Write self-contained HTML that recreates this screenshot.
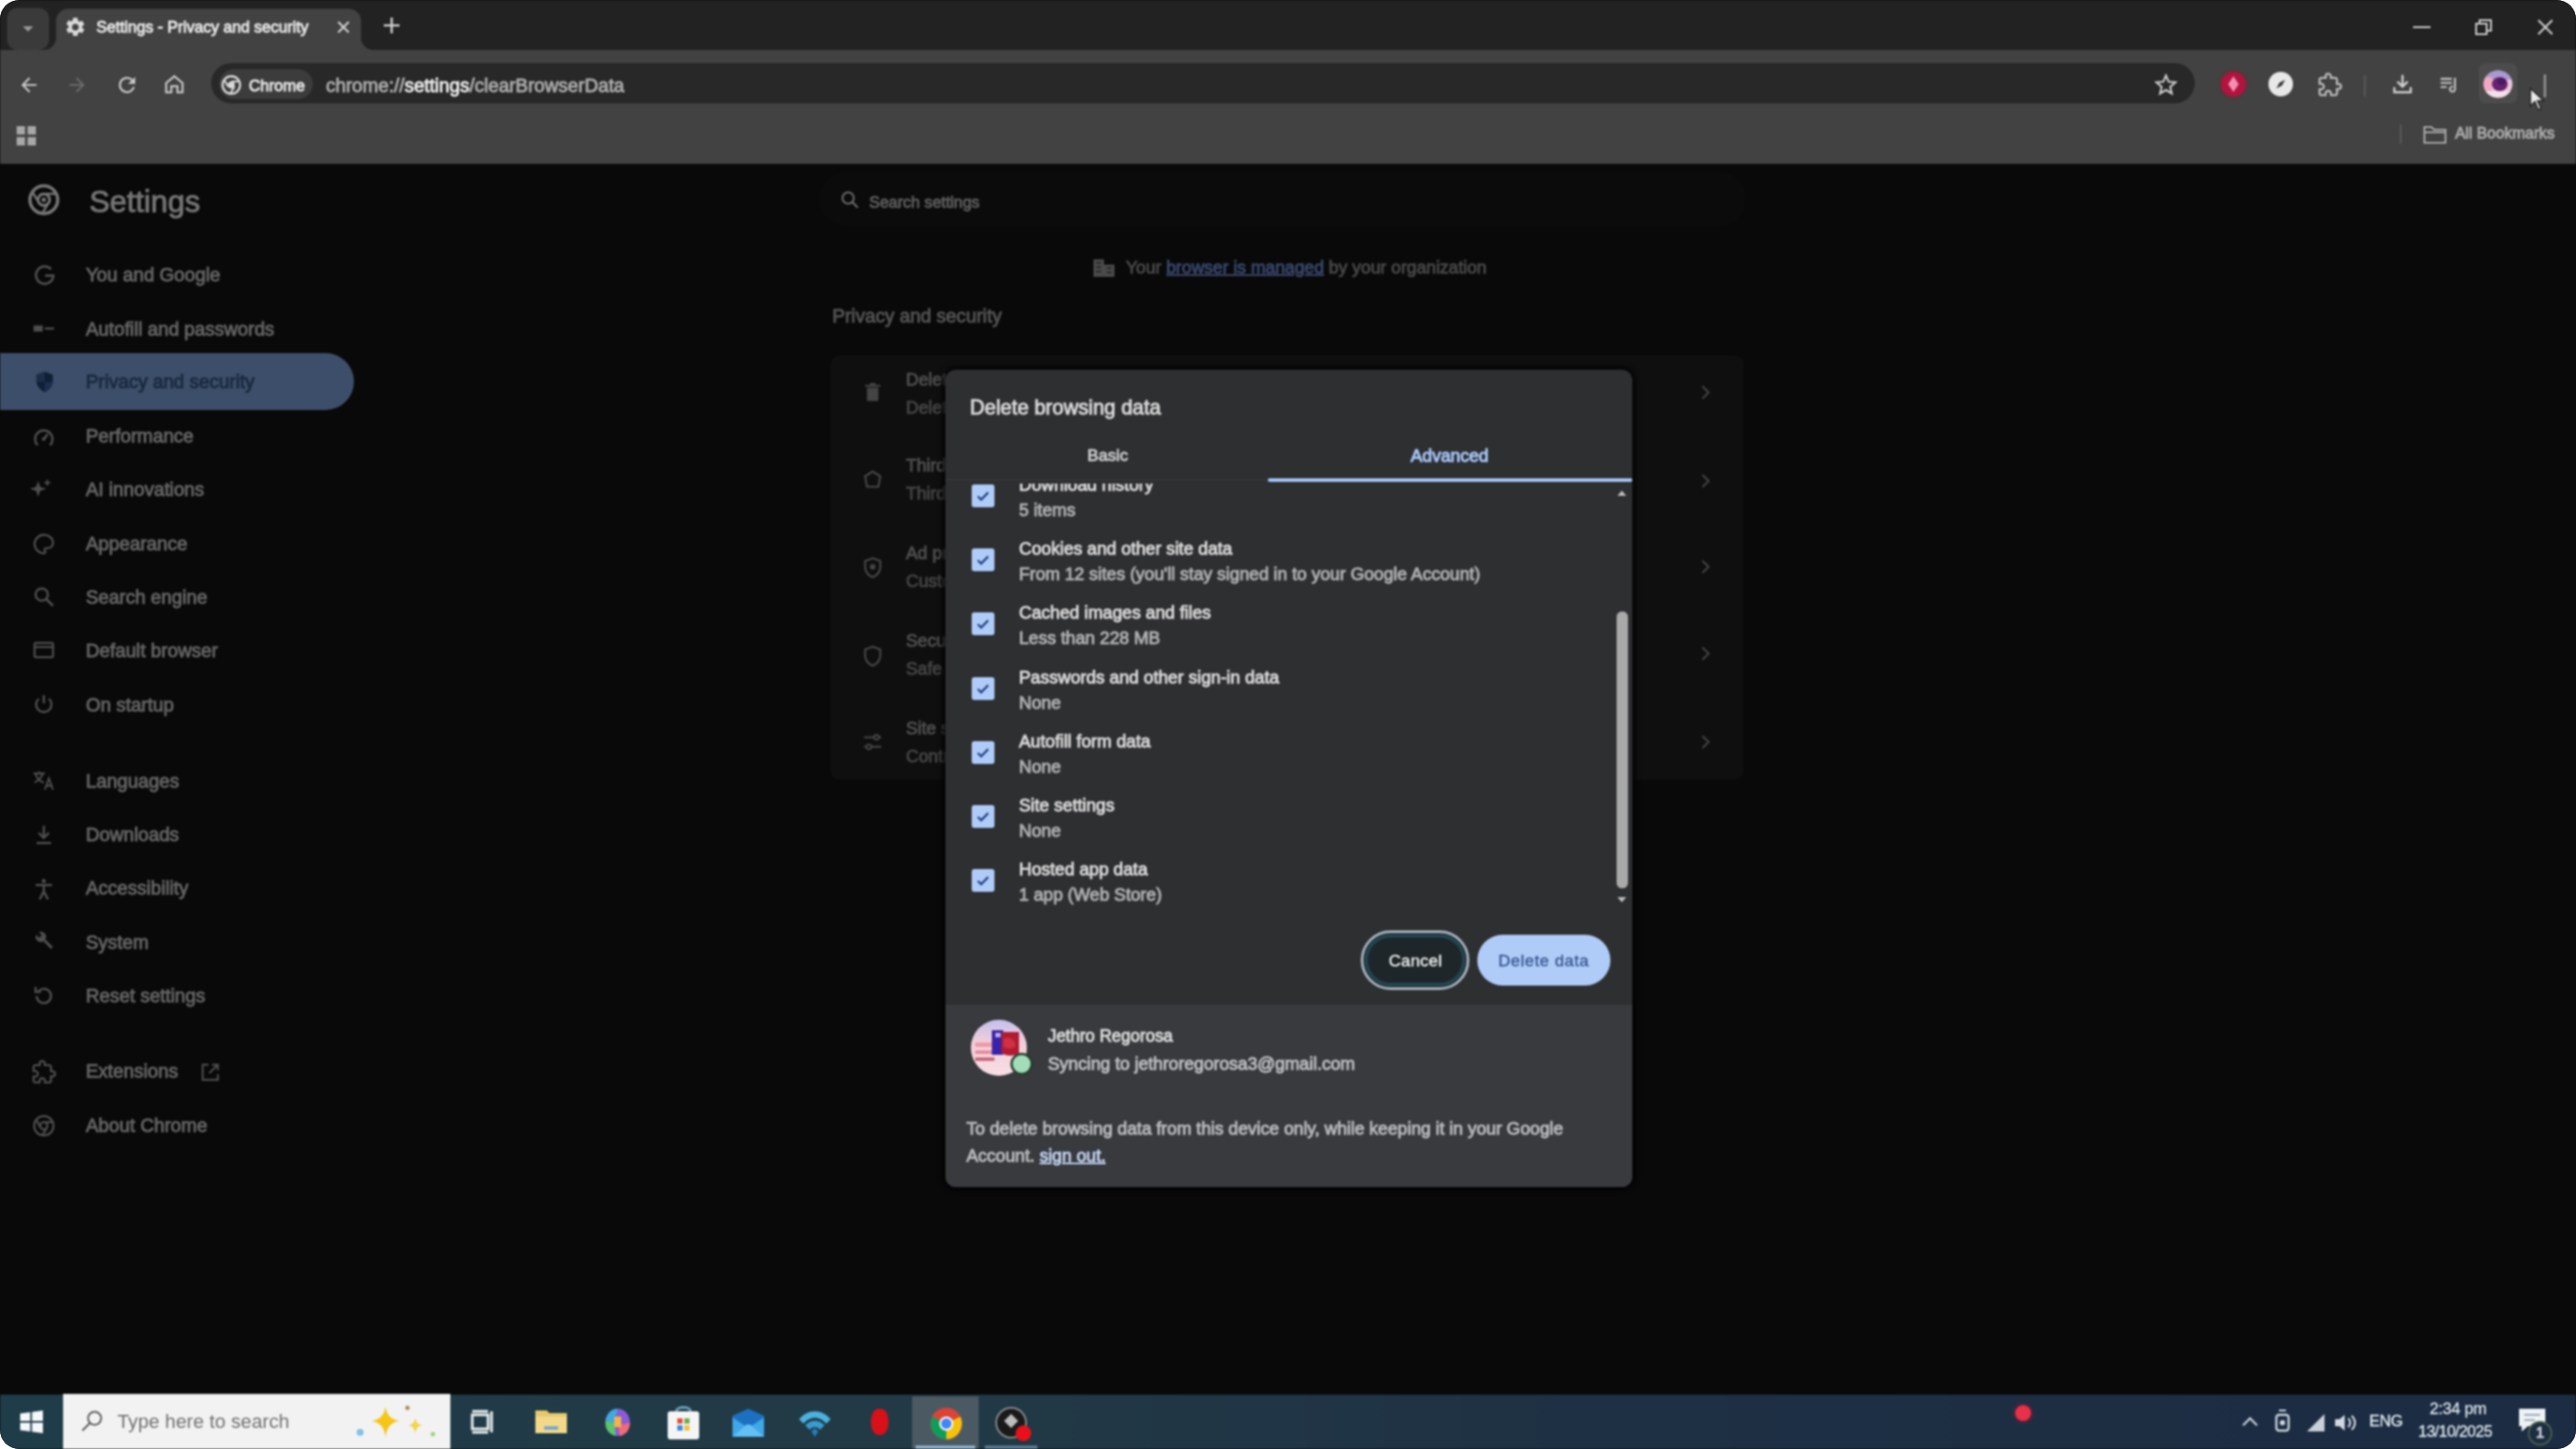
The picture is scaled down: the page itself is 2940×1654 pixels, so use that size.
<!DOCTYPE html>
<html><head><meta charset="utf-8">
<style>
*{box-sizing:border-box;margin:0;padding:0}
html,body{width:2940px;height:1654px;overflow:hidden;background:#fff}
body{font-family:"Liberation Sans",sans-serif;position:relative}
.a{position:absolute;white-space:nowrap}
#w{position:absolute;left:0;top:0;width:2940px;height:1654px;filter:blur(1.2px)}
#w div{-webkit-text-stroke:1px currentColor}
#scr{position:absolute;left:0;top:0;width:2940px;height:1654px;border-radius:22px;overflow:hidden;background:#090909}
#strip{position:absolute;left:0;top:0;width:2940px;height:58px;background:#222}
#tool{position:absolute;left:0;top:57px;width:2940px;height:130px;background:#424242}
#content{position:absolute;left:0;top:187px;width:2940px;height:1405px;background:#090909}
#dlg{position:absolute;left:1079px;top:422px;width:784px;height:933px;background:#2e2f31;border-radius:12px;overflow:hidden;box-shadow:0 0 6px 3px rgba(0,0,0,0.85)}
#task{position:absolute;left:0;top:1592px;width:2940px;height:62px;background:linear-gradient(90deg,#1f3d48 0%,#223a46 35%,#1e3044 65%,#1c2c43 100%)}
.side{color:#626262;font-size:21.5px}
.sicon{position:absolute;left:38px;width:26px;height:26px}
.dt{color:#d6d6d6;font-size:20px}
.ds{color:#adafaf;font-size:20px}
.cb{position:absolute;left:30px;width:26px;height:26px;background:#afcbf8;border-radius:3px}
</style></head><body>
<div id="scr"><div id="w">
  <!-- tab strip -->
  <div id="strip"></div>
  <div id="tool"></div>
  <!-- active tab -->
  <div class="a" style="left:64px;top:10px;width:348px;height:50px;background:#424242;border-radius:14px 14px 0 0"></div>
  <div class="a" style="left:50px;top:43px;width:14px;height:14px;background:#424242"></div>
  <div class="a" style="left:50px;top:43px;width:14px;height:14px;background:#222;border-radius:0 0 14px 0"></div>
  <div class="a" style="left:412px;top:43px;width:14px;height:14px;background:#424242"></div>
  <div class="a" style="left:412px;top:43px;width:14px;height:14px;background:#222;border-radius:0 0 0 14px"></div>
  <div class="a" style="left:8px;top:9px;width:48px;height:48px;background:#3a3a3a;border-radius:12px"></div>
  <div class="a" style="left:110px;top:18px;color:#e3e3e3;font-size:18px;line-height:26px">Settings - Privacy and security</div>
  <!-- url bar -->
  <div class="a" style="left:241px;top:72px;width:2264px;height:46px;background:#282828;border-radius:23px"></div>
  <div class="a" style="left:250px;top:79px;width:107px;height:34px;background:#3c3c3c;border-radius:17px"></div>
  <div class="a" style="left:284px;top:85px;color:#e3e3e3;font-size:18px;line-height:26px">Chrome</div>
  <div class="a" style="left:372px;top:84px;color:#a9a9a9;font-size:21.5px;line-height:28px">chrome://<span style="color:#e8e8e8">settings</span>/clearBrowserData</div>
  <div class="a" style="left:2802px;top:140px;color:#a9a9a9;font-size:17.8px;line-height:24px">All Bookmarks</div>


  <!-- tab strip icons -->
  <svg class="a" style="left:22px;top:24px" width="20" height="16" viewBox="0 0 20 16"><path d="M4 6 H16 L10 12Z" fill="#9a9a9a"/></svg>
  <svg class="a" style="left:73px;top:18px" width="26" height="26" viewBox="0 0 24 24"><path fill="#d8d8d8" d="M19.14 12.94a7.5 7.5 0 0 0 .06-.94 7.5 7.5 0 0 0-.06-.94l2.03-1.58a.5.5 0 0 0 .12-.61l-1.92-3.32a.5.5 0 0 0-.59-.22l-2.39.96a7 7 0 0 0-1.62-.94l-.36-2.54A.5.5 0 0 0 13.92 2h-3.84a.5.5 0 0 0-.5.42l-.36 2.54a7 7 0 0 0-1.62.94l-2.39-.96a.5.5 0 0 0-.59.22L2.7 8.48a.5.5 0 0 0 .12.61l2.03 1.58a7.5 7.5 0 0 0 0 1.88l-2.03 1.58a.5.5 0 0 0-.12.61l1.92 3.32a.5.5 0 0 0 .59.22l2.39-.96a7 7 0 0 0 1.62.94l.36 2.54a.5.5 0 0 0 .5.42h3.84a.5.5 0 0 0 .5-.42l.36-2.54a7 7 0 0 0 1.62-.94l2.39.96a.5.5 0 0 0 .59-.22l1.92-3.32a.5.5 0 0 0-.12-.61zM12 15.5A3.5 3.5 0 1 1 12 8.5a3.5 3.5 0 0 1 0 7z"/></svg>
  <svg class="a" style="left:383px;top:22px" width="18" height="18" viewBox="0 0 18 18"><path d="M3 3 L15 15 M15 3 L3 15" stroke="#d0d0d0" stroke-width="2.4"/></svg>
  <svg class="a" style="left:436px;top:18px" width="22" height="22" viewBox="0 0 22 22"><path d="M11 2 V20 M2 11 H20" stroke="#d0d0d0" stroke-width="2.6"/></svg>
  <!-- window controls -->
  <div class="a" style="left:2754px;top:30px;width:20px;height:2px;background:#cfcfcf"></div>
  <svg class="a" style="left:2824px;top:21px" width="22" height="20" viewBox="0 0 22 20"><rect x="2" y="6" width="12" height="12" fill="none" stroke="#cfcfcf" stroke-width="2"/><path d="M6 6 V2 H19 V14 H14" fill="none" stroke="#cfcfcf" stroke-width="2"/></svg>
  <svg class="a" style="left:2894px;top:20px" width="22" height="22" viewBox="0 0 22 22"><path d="M3 3 L19 19 M19 3 L3 19" stroke="#cfcfcf" stroke-width="2.2"/></svg>
  <!-- nav icons -->
  <svg class="a" style="left:20px;top:84px" width="26" height="26" viewBox="0 0 24 24"><path d="M20 11H7.83l5.59-5.59L12 4l-8 8 8 8 1.41-1.41L7.83 13H20v-2z" fill="#c8c8c8"/></svg>
  <svg class="a" style="left:75px;top:84px" width="26" height="26" viewBox="0 0 24 24"><path d="M4 11h12.17l-5.59-5.59L12 4l8 8-8 8-1.41-1.41L16.17 13H4v-2z" fill="#6a6a6a"/></svg>
  <svg class="a" style="left:131px;top:83px" width="28" height="28" viewBox="0 0 24 24"><path d="M17.65 6.35A7.958 7.958 0 0 0 12 4a8 8 0 1 0 7.73 10h-2.08A6 6 0 1 1 12 6c1.66 0 3.14.69 4.22 1.78L13 11h7V4l-2.35 2.35z" fill="#c8c8c8"/></svg>
  <svg class="a" style="left:185px;top:82px" width="28" height="28" viewBox="0 0 24 24"><path d="M12 3 L3 10.5 V21 H10 V15 H14 V21 H21 V10.5Z M5 11.4 L12 5.6 L19 11.4 V19 H16 V13 H8 V19 H5Z" fill="#c8c8c8"/></svg>
  <!-- chip chrome icon -->
  <svg class="a" style="left:252px;top:85px" width="24" height="24" viewBox="0 0 24 24"><circle cx="12" cy="12" r="10" fill="none" stroke="#d8d8d8" stroke-width="2.4"/><circle cx="12" cy="12" r="4" fill="#d8d8d8"/><path d="M12 8 H21 M8.5 14 L4 6.5 M15.5 14 L11 21.5" stroke="#d8d8d8" stroke-width="2.2"/></svg>
  <!-- star -->
  <svg class="a" style="left:2459px;top:84px" width="26" height="26" viewBox="0 0 24 24"><path d="M12 17.27L18.18 21l-1.64-7.03L22 9.24l-7.19-.61L12 2 9.19 8.63 2 9.24l5.46 4.73L5.82 21z" fill="none" stroke="#cfcfcf" stroke-width="2"/></svg>
  <!-- extension icons -->
  <div class="a" style="left:2535px;top:82px;width:28px;height:28px;border-radius:50%;background:#b0143f;box-shadow:0 0 4px #a01030"></div>
  <svg class="a" style="left:2540px;top:86px" width="18" height="20" viewBox="0 0 18 20"><path d="M9 1 L15 10 L9 19 L3 10Z" fill="#f48fb1"/></svg>
  <div class="a" style="left:2589px;top:82px;width:28px;height:28px;border-radius:50%;background:#e8e8e8"></div>
  <svg class="a" style="left:2593px;top:86px" width="20" height="20" viewBox="0 0 20 20"><path d="M15 5 L11.5 11.5 L5 15 L8.5 8.5Z" fill="#333"/></svg>
  <svg class="a" style="left:2645px;top:83px" width="28" height="28" viewBox="0 0 24 24"><path d="M20.5 11H19V7a2 2 0 0 0-2-2h-4V3.5a2.5 2.5 0 0 0-5 0V5H4a2 2 0 0 0-2 2v3.8h1.5a2.7 2.7 0 0 1 0 5.4H2V20a2 2 0 0 0 2 2h3.8v-1.5a2.7 2.7 0 0 1 5.4 0V22H17a2 2 0 0 0 2-2v-4h1.5a2.5 2.5 0 0 0 0-5z" fill="none" stroke="#bdbdbd" stroke-width="2"/></svg>
  <div class="a" style="left:2698px;top:86px;width:2px;height:24px;background:#5a5a5a"></div>
  <svg class="a" style="left:2728px;top:82px" width="28" height="28" viewBox="0 0 24 24"><path d="M12 3 V14 M7 9.5 L12 14.5 L17 9.5 M4 15 V20 H20 V15" fill="none" stroke="#cfcfcf" stroke-width="2.2"/></svg>
  <svg class="a" style="left:2782px;top:83px" width="28" height="28" viewBox="0 0 24 24"><path d="M3 6H14 M3 10H14 M3 14H9 M17 5V16 M17 16a2.5 2.5 0 1 1-2-2.4" fill="none" stroke="#bdbdbd" stroke-width="2"/></svg>
  <div class="a" style="left:2829px;top:72px;width:44px;height:46px;border-radius:8px;background:#4c4c4c"></div>
  <svg class="a" style="left:2834px;top:80px" width="34" height="32" viewBox="0 0 34 32"><defs><clipPath id="pa"><ellipse cx="17" cy="16" rx="16.5" ry="15.5"/></clipPath></defs><g clip-path="url(#pa)"><rect width="34" height="32" fill="#e8c8d8"/><rect x="0" y="0" width="34" height="11" fill="#a89ad0"/><rect x="0" y="24" width="34" height="8" fill="#f2e0ea"/><rect x="0" y="8" width="10" height="16" fill="#f0a8c0"/><ellipse cx="19" cy="16" rx="9" ry="8" fill="#6a2070"/><ellipse cx="21" cy="13" rx="5" ry="4" fill="#4a1a60"/></g></svg>
  <div class="a" style="left:2903px;top:85px;width:3px;height:26px;background:#8a8a8a"></div>
  <!-- cursor -->
  <svg class="a" style="left:2886px;top:99px" width="22" height="28" viewBox="0 0 22 28"><path d="M2 2 L2 22 L7 17 L11 26 L14 25 L10 16 L17 16Z" fill="#e8e8e8" stroke="#222" stroke-width="1.5"/></svg>
  <!-- apps grid -->
  <svg class="a" style="left:18px;top:143px" width="24" height="24" viewBox="0 0 24 24"><rect x="1" y="1" width="9.5" height="9.5" fill="#a8a8a8"/><rect x="13.5" y="1" width="9.5" height="9.5" fill="#a8a8a8"/><rect x="1" y="13.5" width="9.5" height="9.5" fill="#a8a8a8"/><rect x="13.5" y="13.5" width="9.5" height="9.5" fill="#a8a8a8"/></svg>
  <!-- bookmarks -->
  <div class="a" style="left:2739px;top:142px;width:2px;height:22px;background:#5a5a5a"></div>
  <svg class="a" style="left:2765px;top:142px" width="28" height="24" viewBox="0 0 28 24"><path d="M2 3 H10 L13 6 H26 V21 H2Z M2 9 H26" fill="none" stroke="#a8a8a8" stroke-width="2.2"/></svg>

  <div id="content"></div>
  <!-- sidebar -->
  <div class="a" style="left:102px;top:210px;color:#747474;font-size:35px;line-height:40px">Settings</div>
  <div class="a" style="left:0;top:403px;width:404px;height:65px;background:#3d4e6a;border-radius:0 33px 33px 0"></div>
  <div class="a side" style="left:98px;top:302px">You and Google</div>
  <div class="a side" style="left:98px;top:364px">Autofill and passwords</div>
  <div class="a side" style="left:98px;top:424px;color:#1a2a40">Privacy and security</div>
  <div class="a side" style="left:98px;top:486px">Performance</div>
  <div class="a side" style="left:98px;top:547px">AI innovations</div>
  <div class="a side" style="left:98px;top:609px">Appearance</div>
  <div class="a side" style="left:98px;top:670px">Search engine</div>
  <div class="a side" style="left:98px;top:731px">Default browser</div>
  <div class="a side" style="left:98px;top:793px">On startup</div>
  <div class="a side" style="left:98px;top:880px">Languages</div>
  <div class="a side" style="left:98px;top:941px">Downloads</div>
  <div class="a side" style="left:98px;top:1002px">Accessibility</div>
  <div class="a side" style="left:98px;top:1064px">System</div>
  <div class="a side" style="left:98px;top:1125px">Reset settings</div>
  <div class="a side" style="left:98px;top:1211px">Extensions</div>
  <div class="a side" style="left:98px;top:1273px">About Chrome</div>

<svg class="a" style="left:31.0px;top:209.0px" width="38" height="38" viewBox="0 0 24 24"><circle cx="12" cy="12" r="10" fill="none" stroke="#747474" stroke-width="2.4"/><circle cx="12" cy="12" r="4.2" fill="none" stroke="#747474" stroke-width="2"/><circle cx="12" cy="12" r="1.6" fill="#747474"/><path d="M12 7.8 H21 M8.4 14 L4 6.8 M15.6 14 L11 21.6" stroke="#747474" stroke-width="1.6"/></svg>
<svg class="a" style="left:37.0px;top:300.0px" width="28" height="28" viewBox="0 0 24 24"><path d="M18.2 6.2 A8.5 8.5 0 1 0 20.5 12.5 H12.5" fill="none" stroke="#4e4e4e" stroke-width="2.4"/></svg>
<svg class="a" style="left:36.0px;top:361.0px" width="28" height="28" viewBox="0 0 24 24"><path d="M2 9h9v6H2z M13 11h9v2h-9z" fill="#4e4e4e"/></svg>
<svg class="a" style="left:37.0px;top:422.0px" width="28" height="28" viewBox="0 0 24 24"><path d="M12 2 L20 5 V11 C20 16 16.5 20 12 22 C7.5 20 4 16 4 11 V5Z" fill="#0f1f35"/><path d="M12 12 L20 12 C19.5 16 16.5 20 12 22Z M12 2 V12 H4 V5Z" fill="#1b2e4c"/></svg>
<svg class="a" style="left:36.0px;top:486.0px" width="28" height="28" viewBox="0 0 24 24"><path d="M6 19a8.5 8.5 0 1 1 12 0" fill="none" stroke="#4e4e4e" stroke-width="2.2"/><path d="M12 13 L16 8" stroke="#4e4e4e" stroke-width="2.2"/><circle cx="12" cy="13" r="1.8" fill="#4e4e4e"/></svg>
<svg class="a" style="left:33.0px;top:544.0px" width="28" height="28" viewBox="0 0 24 24"><path d="M9 4 L11 10 L17 12 L11 14 L9 20 L7 14 L1 12 L7 10Z M18 2 L19 5 L22 6 L19 7 L18 10 L17 7 L14 6 L17 5Z" fill="#4e4e4e"/></svg>
<svg class="a" style="left:36.0px;top:607.0px" width="28" height="28" viewBox="0 0 24 24"><path d="M12 3a9 9 0 0 0 0 18c1 0 1.5-.7 1.5-1.5 0-1-.8-1.3-.8-2.2 0-.8.7-1.3 1.5-1.3H16a5 5 0 0 0 5-5C21 6.5 17 3 12 3z" fill="none" stroke="#4e4e4e" stroke-width="2"/></svg>
<svg class="a" style="left:36.0px;top:667.0px" width="28" height="28" viewBox="0 0 24 24"><circle cx="10" cy="10" r="6" fill="none" stroke="#4e4e4e" stroke-width="2.2"/><path d="M14.5 14.5 L21 21" stroke="#4e4e4e" stroke-width="2.4"/></svg>
<svg class="a" style="left:36.0px;top:728.0px" width="28" height="28" viewBox="0 0 24 24"><rect x="3" y="5" width="18" height="14" rx="1.5" fill="none" stroke="#4e4e4e" stroke-width="2"/><path d="M3 9 H21" stroke="#4e4e4e" stroke-width="2"/></svg>
<svg class="a" style="left:36.0px;top:790.0px" width="28" height="28" viewBox="0 0 24 24"><path d="M12 3 V11" stroke="#4e4e4e" stroke-width="2.2"/><path d="M7 6.5a7.5 7.5 0 1 0 10 0" fill="none" stroke="#4e4e4e" stroke-width="2.2"/></svg>
<svg class="a" style="left:36.0px;top:877.0px" width="28" height="28" viewBox="0 0 24 24"><path d="M2 5 H13 M7.5 3 V5 M4 5 C5 10 9 13 12 14 M11 5 C10 9 7 12 3 14 M13 21 L17 10 L21 21 M14.5 17 H19.5" fill="none" stroke="#4e4e4e" stroke-width="1.8"/></svg>
<svg class="a" style="left:36.0px;top:939.0px" width="28" height="28" viewBox="0 0 24 24"><path d="M12 3 V15 M7 10 L12 15 L17 10 M5 20 H19" fill="none" stroke="#4e4e4e" stroke-width="2.2"/></svg>
<svg class="a" style="left:36.0px;top:1001.0px" width="28" height="28" viewBox="0 0 24 24"><circle cx="12" cy="4" r="2" fill="#4e4e4e"/><path d="M4 8 H20 M12 8 V14 L8 22 M12 14 L16 22" fill="none" stroke="#4e4e4e" stroke-width="2.2"/></svg>
<svg class="a" style="left:36.0px;top:1060.0px" width="28" height="28" viewBox="0 0 24 24"><path d="M21 18 L13.5 10.5 A5 5 0 0 0 7 3.5 L10 6.5 L7.5 9 L4.5 6 A5 5 0 0 0 11.5 12.5 L19 20Z" fill="#4e4e4e"/></svg>
<svg class="a" style="left:36.0px;top:1123.0px" width="28" height="28" viewBox="0 0 24 24"><path d="M5 12a7 7 0 1 0 2-5" fill="none" stroke="#4e4e4e" stroke-width="2.2"/><path d="M4 3 V8 H9" fill="none" stroke="#4e4e4e" stroke-width="2.2"/></svg>
<svg class="a" style="left:36.0px;top:1210.0px" width="28" height="28" viewBox="0 0 24 24"><path d="M20.5 11H19V7a2 2 0 0 0-2-2h-4V3.5a2.5 2.5 0 0 0-5 0V5H4a2 2 0 0 0-2 2v3.8h1.5a2.7 2.7 0 0 1 0 5.4H2V20a2 2 0 0 0 2 2h3.8v-1.5a2.7 2.7 0 0 1 5.4 0V22H17a2 2 0 0 0 2-2v-4h1.5a2.5 2.5 0 0 0 0-5z" fill="none" stroke="#4e4e4e" stroke-width="2"/></svg>
<svg class="a" style="left:227.0px;top:1211.0px" width="26" height="26" viewBox="0 0 24 24"><path d="M10 4 H4 V20 H20 V14 M14 4 H20 V10 M20 4 L11 13" fill="none" stroke="#4e4e4e" stroke-width="2"/></svg>
<svg class="a" style="left:36.0px;top:1271.0px" width="28" height="28" viewBox="0 0 24 24"><circle cx="12" cy="12" r="9.5" fill="none" stroke="#4e4e4e" stroke-width="2"/><circle cx="12" cy="12" r="3.5" fill="none" stroke="#4e4e4e" stroke-width="2"/><path d="M12 8.5 H21 M9 13.8 L4.5 6 M15 13.8 L10.5 21.5" stroke="#4e4e4e" stroke-width="2"/></svg>
  <!-- main behind -->
  <div class="a" style="left:935px;top:196px;width:1058px;height:62px;background:#0b0b0b;border-radius:31px"></div>
  <svg class="a" style="left:958px;top:216px" width="24" height="24" viewBox="0 0 24 24"><circle cx="10" cy="10" r="6.5" fill="none" stroke="#6a6a6a" stroke-width="2.2"/><path d="M14.5 14.5 L21 21" stroke="#6a6a6a" stroke-width="2.4"/></svg>
  <svg class="a" style="left:1246px;top:294px" width="28" height="24" viewBox="0 0 28 24"><path d="M2 2 H14 V22 H2Z M14 8 H26 V22 H14Z" fill="#4a4a4a"/><path d="M5 6 H11 M5 11 H11 M5 16 H11 M17 12 H23 M17 17 H23" stroke="#2a2a2a" stroke-width="2"/></svg>
  <div class="a" style="left:948px;top:406px;width:1042px;height:484px;background:#0f0f0f;border-radius:10px"></div>
  <svg class="a" style="left:983px;top:435px" width="26" height="26" viewBox="0 0 24 24"><path d="M6 7 H18 V21 H6Z M4 4 H20 V6 H4Z M9 2 H15 V4 H9Z" fill="#444"/></svg>
  <svg class="a" style="left:983px;top:535px" width="26" height="26" viewBox="0 0 24 24"><path d="M12 3 L20 8 L18 19 H6 L4 8Z" fill="none" stroke="#444" stroke-width="2.2"/></svg>
  <svg class="a" style="left:983px;top:635px" width="26" height="26" viewBox="0 0 24 24"><path d="M12 2 L20 5 V11 C20 16 16.5 20 12 22 C7.5 20 4 16 4 11 V5Z" fill="none" stroke="#444" stroke-width="2.2"/><circle cx="12" cy="11" r="3" fill="#444"/></svg>
  <svg class="a" style="left:983px;top:736px" width="26" height="26" viewBox="0 0 24 24"><path d="M12 2 L20 5 V11 C20 16 16.5 20 12 22 C7.5 20 4 16 4 11 V5Z" fill="none" stroke="#444" stroke-width="2.2"/></svg>
  <svg class="a" style="left:983px;top:834px" width="26" height="26" viewBox="0 0 24 24"><path d="M3 7 H14 M18 7 H21 M3 17 H6 M10 17 H21" stroke="#444" stroke-width="2.2"/><circle cx="16" cy="7" r="2.5" fill="none" stroke="#444" stroke-width="2"/><circle cx="8" cy="17" r="2.5" fill="none" stroke="#444" stroke-width="2"/></svg>
  <div class="a" style="left:1034px;top:422px;color:#4c4c4c;font-size:20px">Delete browsing data</div>
  <div class="a" style="left:1034px;top:454px;color:#424242;font-size:20px">Delete history, cookies, cache, and more</div>
  <div class="a" style="left:1034px;top:520px;color:#4c4c4c;font-size:20px">Third-party cookies</div>
  <div class="a" style="left:1034px;top:552px;color:#424242;font-size:20px">Third-party cookies are allowed</div>
  <div class="a" style="left:1034px;top:620px;color:#4c4c4c;font-size:20px">Ad privacy</div>
  <div class="a" style="left:1034px;top:652px;color:#424242;font-size:20px">Customize the info used by sites to show you ads</div>
  <div class="a" style="left:1034px;top:720px;color:#4c4c4c;font-size:20px">Security</div>
  <div class="a" style="left:1034px;top:752px;color:#424242;font-size:20px">Safe Browsing (protection from dangerous sites)</div>
  <div class="a" style="left:1034px;top:820px;color:#4c4c4c;font-size:20px">Site settings</div>
  <div class="a" style="left:1034px;top:852px;color:#424242;font-size:20px">Controls what information sites can use and show</div>
  <svg class="a" style="left:1940px;top:439px" width="14" height="18" viewBox="0 0 14 18"><path d="M3 2 L10 9 L3 16" fill="none" stroke="#444" stroke-width="2.2"/></svg>
  <svg class="a" style="left:1940px;top:540px" width="14" height="18" viewBox="0 0 14 18"><path d="M3 2 L10 9 L3 16" fill="none" stroke="#444" stroke-width="2.2"/></svg>
  <svg class="a" style="left:1940px;top:638px" width="14" height="18" viewBox="0 0 14 18"><path d="M3 2 L10 9 L3 16" fill="none" stroke="#444" stroke-width="2.2"/></svg>
  <svg class="a" style="left:1940px;top:737px" width="14" height="18" viewBox="0 0 14 18"><path d="M3 2 L10 9 L3 16" fill="none" stroke="#444" stroke-width="2.2"/></svg>
  <svg class="a" style="left:1940px;top:838px" width="14" height="18" viewBox="0 0 14 18"><path d="M3 2 L10 9 L3 16" fill="none" stroke="#444" stroke-width="2.2"/></svg>

  <div class="a" style="left:992px;top:220px;color:#5a5a5a;font-size:18.3px">Search settings</div>
  <div class="a" style="left:1285px;top:294px;color:#464646;font-size:20px">Your <span style="color:#37466a;text-decoration:underline">browser is managed</span> by your organization</div>
  <div class="a" style="left:950px;top:348px;color:#525252;font-size:21.6px">Privacy and security</div>
  

  <!-- dialog -->
  <div id="dlg">
    <div class="a dt" style="left:28px;top:28px;font-size:23.2px;line-height:30px">Delete browsing data</div>
    <div class="a" style="left:162px;top:85px;color:#c4c7c5;font-size:19px;line-height:26px">Basic</div>
    <div class="a" style="left:531px;top:85px;color:#a8c7fa;font-size:20px;line-height:26px">Advanced</div>
    <div class="a" style="left:0;top:125px;width:784px;height:1px;background:#3a3a3a"></div>
    <div class="a" style="left:368px;top:124px;width:416px;height:4px;background:#a8c7fa;border-radius:2px"></div>
    <div id="rows" class="a" style="left:0;top:130px;width:784px;height:488px;overflow:hidden">
<div class="cb" style="top:1px"><svg width="26" height="26" viewBox="0 0 26 26"><path d="M7 13.5l3.8 3.8 8-8.2" fill="none" stroke="#1d3f7c" stroke-width="2.3"/></svg></div>
<div class="a dt" style="left:84px;top:-11px;line-height:24px">Download history</div>
<div class="a ds" style="left:84px;top:18px;line-height:24px">5 items</div>
<div class="cb" style="top:74px"><svg width="26" height="26" viewBox="0 0 26 26"><path d="M7 13.5l3.8 3.8 8-8.2" fill="none" stroke="#1d3f7c" stroke-width="2.3"/></svg></div>
<div class="a dt" style="left:84px;top:62px;line-height:24px">Cookies and other site data</div>
<div class="a ds" style="left:84px;top:91px;line-height:24px">From 12 sites (you'll stay signed in to your Google Account)</div>
<div class="cb" style="top:147px"><svg width="26" height="26" viewBox="0 0 26 26"><path d="M7 13.5l3.8 3.8 8-8.2" fill="none" stroke="#1d3f7c" stroke-width="2.3"/></svg></div>
<div class="a dt" style="left:84px;top:135px;line-height:24px">Cached images and files</div>
<div class="a ds" style="left:84px;top:164px;line-height:24px">Less than 228 MB</div>
<div class="cb" style="top:221px"><svg width="26" height="26" viewBox="0 0 26 26"><path d="M7 13.5l3.8 3.8 8-8.2" fill="none" stroke="#1d3f7c" stroke-width="2.3"/></svg></div>
<div class="a dt" style="left:84px;top:209px;line-height:24px">Passwords and other sign-in data</div>
<div class="a ds" style="left:84px;top:238px;line-height:24px">None</div>
<div class="cb" style="top:294px"><svg width="26" height="26" viewBox="0 0 26 26"><path d="M7 13.5l3.8 3.8 8-8.2" fill="none" stroke="#1d3f7c" stroke-width="2.3"/></svg></div>
<div class="a dt" style="left:84px;top:282px;line-height:24px">Autofill form data</div>
<div class="a ds" style="left:84px;top:311px;line-height:24px">None</div>
<div class="cb" style="top:367px"><svg width="26" height="26" viewBox="0 0 26 26"><path d="M7 13.5l3.8 3.8 8-8.2" fill="none" stroke="#1d3f7c" stroke-width="2.3"/></svg></div>
<div class="a dt" style="left:84px;top:355px;line-height:24px">Site settings</div>
<div class="a ds" style="left:84px;top:384px;line-height:24px">None</div>
<div class="cb" style="top:440px"><svg width="26" height="26" viewBox="0 0 26 26"><path d="M7 13.5l3.8 3.8 8-8.2" fill="none" stroke="#1d3f7c" stroke-width="2.3"/></svg></div>
<div class="a dt" style="left:84px;top:428px;line-height:24px">Hosted app data</div>
<div class="a ds" style="left:84px;top:457px;line-height:24px">1 app (Web Store)</div>
    </div>

    <!-- scrollbar -->
    <div class="a" style="left:766px;top:276px;width:13px;height:316px;background:#a9a9a9;border-radius:6px"></div>
    <svg class="a" style="left:765px;top:136px" width="14" height="10" viewBox="0 0 14 10"><path d="M2 8 L7 2 L12 8Z" fill="#bdbdbd"/></svg>
    <svg class="a" style="left:765px;top:600px" width="14" height="10" viewBox="0 0 14 10"><path d="M2 2 L7 8 L12 2Z" fill="#bdbdbd"/></svg>
    <!-- buttons -->
    <div class="a" style="left:474px;top:640px;width:124px;height:68px;border:3px solid #a3b5c2;border-radius:34px"></div>
    <div class="a" style="left:479px;top:645px;width:114px;height:58px;border:3px solid #1f4a5a;background:#1f2629;border-radius:29px"></div>
    <div class="a" style="left:506px;top:663px;color:#f0f0f0;font-size:19px;line-height:24px;-webkit-text-stroke:0.4px #f0f0f0;letter-spacing:0.3px">Cancel</div>
    <div class="a" style="left:607px;top:645px;width:152px;height:58px;background:#afcbf8;border-radius:29px"></div>
    <div class="a" style="left:631px;top:663px;color:#34538c;font-size:19px;line-height:24px;-webkit-text-stroke:0.3px #34538c;letter-spacing:0.6px">Delete data</div>
    <!-- footer -->
    <div class="a" style="left:0;top:725px;width:784px;height:210px;background:#383a3e"></div>
    <svg class="a" style="left:28px;top:742px" width="72" height="72" viewBox="0 0 72 72">
      <defs><clipPath id="av"><circle cx="33" cy="32" r="32"/></clipPath>
      <linearGradient id="avbg" x1="0" y1="0" x2="0" y2="1"><stop offset="0" stop-color="#c4c0ee"/><stop offset="0.35" stop-color="#f0cdd8"/><stop offset="1" stop-color="#fbe2e8"/></linearGradient></defs>
      <g clip-path="url(#av)">
        <rect x="0" y="0" width="72" height="72" fill="url(#avbg)"/>
        <rect x="6" y="26" width="22" height="5" fill="#f09aa6"/>
        <rect x="6" y="35" width="22" height="4" fill="#e88a98"/>
        <rect x="6" y="43" width="22" height="4" fill="#c86a7a"/>
        <rect x="25" y="12" width="13" height="28" fill="#3a22a8"/>
        <rect x="29" y="15" width="6" height="5" fill="#b8b0f0"/>
        <path d="M36 14 H56 V38 C50 42 42 42 36 38Z" fill="#b01c32"/>
        <path d="M38 22 C44 18 52 22 52 30 C48 34 42 34 38 30Z" fill="#d03040"/>
      </g>
      <circle cx="59" cy="50.5" r="11.5" fill="#a2dcb8" stroke="#233d2c" stroke-width="2.5"/>
    </svg>
    <div class="a dt" style="left:117px;top:749px;line-height:24px;font-size:19.3px">Jethro Regorosa</div>
    <div class="a ds" style="left:117px;top:780px;line-height:24px;color:#b9bcbd">Syncing to jethroregorosa3@gmail.com</div>
    <div class="a ds" style="left:24px;top:854px;line-height:24px;color:#b6b8ba">To delete browsing data from this device only, while keeping it in your Google</div>
    <div class="a ds" style="left:24px;top:885px;line-height:24px;color:#b6b8ba">Account. <span style="color:#c0d0ee;text-decoration:underline">sign out.</span></div>
  </div>


  <!-- taskbar -->
  <div id="task"></div>
  <svg class="a" style="left:22px;top:1610px" width="28" height="26" viewBox="0 0 28 26"><path d="M1 3.5 L12.5 2 V12 H1Z M14.5 1.7 L27 0 V12 H14.5Z M1 14 H12.5 V24 L1 22.5Z M14.5 14 H27 V26 L14.5 24.3Z" fill="#f4f8fa"/></svg>
  <div class="a" style="left:72px;top:1591px;width:442px;height:63px;background:#f2f2f2;border-top:1px solid #dcdcdc"></div>
  <svg class="a" style="left:91px;top:1608px" width="28" height="28" viewBox="0 0 28 28"><circle cx="17" cy="11" r="7.5" fill="none" stroke="#5a5a5a" stroke-width="2"/><path d="M11.5 16.5 L3 25" stroke="#5a5a5a" stroke-width="2.2"/></svg>
  <div class="a" style="left:134px;top:1610px;color:#707070;font-size:22px;line-height:26px;letter-spacing:0.1px;-webkit-text-stroke:0">Type here to search</div>
  <svg class="a" style="left:400px;top:1598px" width="110" height="50" viewBox="0 0 110 50"><path d="M40 8 C42 18 46 22 56 24 C46 26 42 30 40 42 C38 30 34 26 24 24 C34 22 38 18 40 8Z" fill="#f5c518"/><path d="M74 20 C75 26 77 28 82 29 C77 30 75 32 74 38 C73 32 71 30 66 29 C71 28 73 26 74 20Z" fill="#f3d34a"/><circle cx="11" cy="37" r="4" fill="#7ec3e8"/><circle cx="65" cy="9" r="2.5" fill="#b08a5a"/><circle cx="94" cy="39" r="2.5" fill="#9ccf7a"/></svg>
  <svg class="a" style="left:536px;top:1609px" width="30" height="28" viewBox="0 0 30 28"><path d="M3 6 H21 V22 H3Z M25 2 V26 M3 2 H21 M3 26 H21" fill="none" stroke="#e8eef0" stroke-width="3"/></svg>
  <svg class="a" style="left:609px;top:1606px" width="40" height="32" viewBox="0 0 40 32"><path d="M2 4 H15 L18 7 H38 V30 H2Z" fill="#e6c96a"/><path d="M2 11 H38 V30 H2Z" fill="#f2d98a"/><path d="M12 22 H28 V26 H12Z" fill="#7aa6c9"/></svg>
  <svg class="a" style="left:686px;top:1605px" width="38" height="38" viewBox="0 0 38 38"><path d="M19 3 C12 3 6 9 5 17 C4 25 9 33 17 34 L21 34 C28 33 33 27 33 19 C33 10 27 3 19 3Z" fill="#8a5bd6"/><path d="M5 17 C6 9 12 3 19 3 L15 19 Z" fill="#3fa9e0"/><path d="M17 34 C9 33 4 25 5 17 L15 19Z" fill="#5cc46a"/><path d="M21 34 C28 33 33 27 33 19 L20 22Z" fill="#f06a7a"/><path d="M15 12 H23 V24 H15Z" fill="#f3b24a"/></svg>
  <svg class="a" style="left:758px;top:1603px" width="44" height="42" viewBox="0 0 44 42"><path d="M14 8 C14 2 30 2 30 8" fill="none" stroke="#6aa0b8" stroke-width="3"/><rect x="4" y="8" width="36" height="32" rx="3" fill="#f5f5f5"/><rect x="15" y="16" width="6" height="6" fill="#e84a3a"/><rect x="23" y="16" width="6" height="6" fill="#6ab04a"/><rect x="15" y="24" width="6" height="6" fill="#3a8ae0"/><rect x="23" y="24" width="6" height="6" fill="#f3c040"/></svg>
  <svg class="a" style="left:834px;top:1606px" width="40" height="36" viewBox="0 0 40 36"><path d="M2 10 L20 2 L38 10 V34 H2Z" fill="#1d6fc0"/><path d="M2 12 L20 24 L38 12 V34 H2Z" fill="#3fa8e8"/><path d="M2 34 L18 20 L22 20 L38 34Z" fill="#62c0f2"/></svg>
  <svg class="a" style="left:909px;top:1604px" width="42" height="40" viewBox="0 0 42 40"><path d="M3 16 C13 4 29 4 39 16 L34 21 C26 12 16 12 8 21Z" fill="#4ab2e0"/><path d="M10 23 C16 16 26 16 32 23 L27 28 C24 24 18 24 15 28Z" fill="#3a9ad0"/><path d="M17 30 L21 26 L25 30 L21 36Z" fill="#2a7ab8"/></svg>
  <div class="a" style="left:994px;top:1608px;width:20px;height:30px;border-radius:45%;background:#d8101a"></div>
  <div class="a" style="left:1041px;top:1594px;width:76px;height:60px;background:#4b5a62"></div>
  <div class="a" style="left:1045px;top:1650px;width:68px;height:4px;background:#8fb0c8"></div>
  <svg class="a" style="left:1060px;top:1605px" width="40" height="40" viewBox="0 0 40 40"><circle cx="20" cy="20" r="18" fill="#db4437"/><path d="M20 20 L36 12 A18 18 0 0 1 20 38Z" fill="#f4c20d"/><path d="M20 20 L20 38 A18 18 0 0 1 4 12Z" fill="#0f9d58"/><circle cx="20" cy="20" r="8" fill="#fff"/><circle cx="20" cy="20" r="6" fill="#4285f4"/></svg>
  <svg class="a" style="left:1132px;top:1604px" width="48" height="44" viewBox="0 0 48 44"><circle cx="22" cy="20" r="17" fill="#1a1a1a" stroke="#8a8a8a" stroke-width="2"/><path d="M14 18 L22 10 L30 18 L22 26Z" fill="#bdbdbd"/><circle cx="36" cy="32" r="9" fill="#e8101a"/></svg>
  <div class="a" style="left:1124px;top:1650px;width:60px;height:4px;background:#5a7a90"></div>
  <!-- tray -->
  <div class="a" style="left:2300px;top:1604px;width:18px;height:18px;border-radius:50%;background:#e8304a;box-shadow:0 0 5px #c01030"></div>
  <svg class="a" style="left:2557px;top:1614px" width="22" height="16" viewBox="0 0 22 16"><path d="M3 13 L11 5 L19 13" fill="none" stroke="#c8d0d8" stroke-width="2.4"/></svg>
  <svg class="a" style="left:2594px;top:1607px" width="22" height="30" viewBox="0 0 22 30"><rect x="4" y="8" width="14" height="18" rx="3" fill="none" stroke="#d0d8e0" stroke-width="2.4"/><circle cx="11" cy="17" r="3" fill="#d0d8e0"/><path d="M7 3 H15" stroke="#d0d8e0" stroke-width="2"/></svg>
  <svg class="a" style="left:2631px;top:1612px" width="24" height="24" viewBox="0 0 24 24"><path d="M2 22 L22 2 V22Z" fill="#c8d0d8"/></svg>
  <svg class="a" style="left:2663px;top:1612px" width="30" height="24" viewBox="0 0 30 24"><path d="M2 8 H7 L13 3 V21 L7 16 H2Z" fill="#d0d8e0"/><path d="M17 7 C20 10 20 14 17 17 M21 4 C26 9 26 15 21 20" fill="none" stroke="#d0d8e0" stroke-width="2.2"/></svg>
  <div class="a" style="left:2704px;top:1611px;color:#dfe6ec;font-size:18px;line-height:22px;-webkit-text-stroke:0.4px #dfe6ec;letter-spacing:-0.3px">ENG</div>
  <div class="a" style="left:2773px;top:1596px;color:#dfe6ec;font-size:18.5px;line-height:24px;-webkit-text-stroke:0.3px #dfe6ec;letter-spacing:-0.3px">2:34 pm</div>
  <div class="a" style="left:2760px;top:1622px;color:#dfe6ec;font-size:18px;line-height:24px;-webkit-text-stroke:0.3px #dfe6ec;letter-spacing:-0.6px">13/10/2025</div>
  <svg class="a" style="left:2873px;top:1606px" width="34" height="30" viewBox="0 0 34 30"><path d="M2 2 H32 V22 H12 L5 28 V22 H2Z" fill="#eef2f5"/><path d="M8 9 H26 M8 15 H20" stroke="#9aa8b4" stroke-width="2"/></svg>
  <div class="a" style="left:2885px;top:1622px;width:28px;height:28px;border-radius:50%;border:2px solid #4a6050;background:#1d2e40;color:#c8d0d8;font-size:17px;line-height:24px;text-align:center">1</div>
</div></div>
</body></html>
